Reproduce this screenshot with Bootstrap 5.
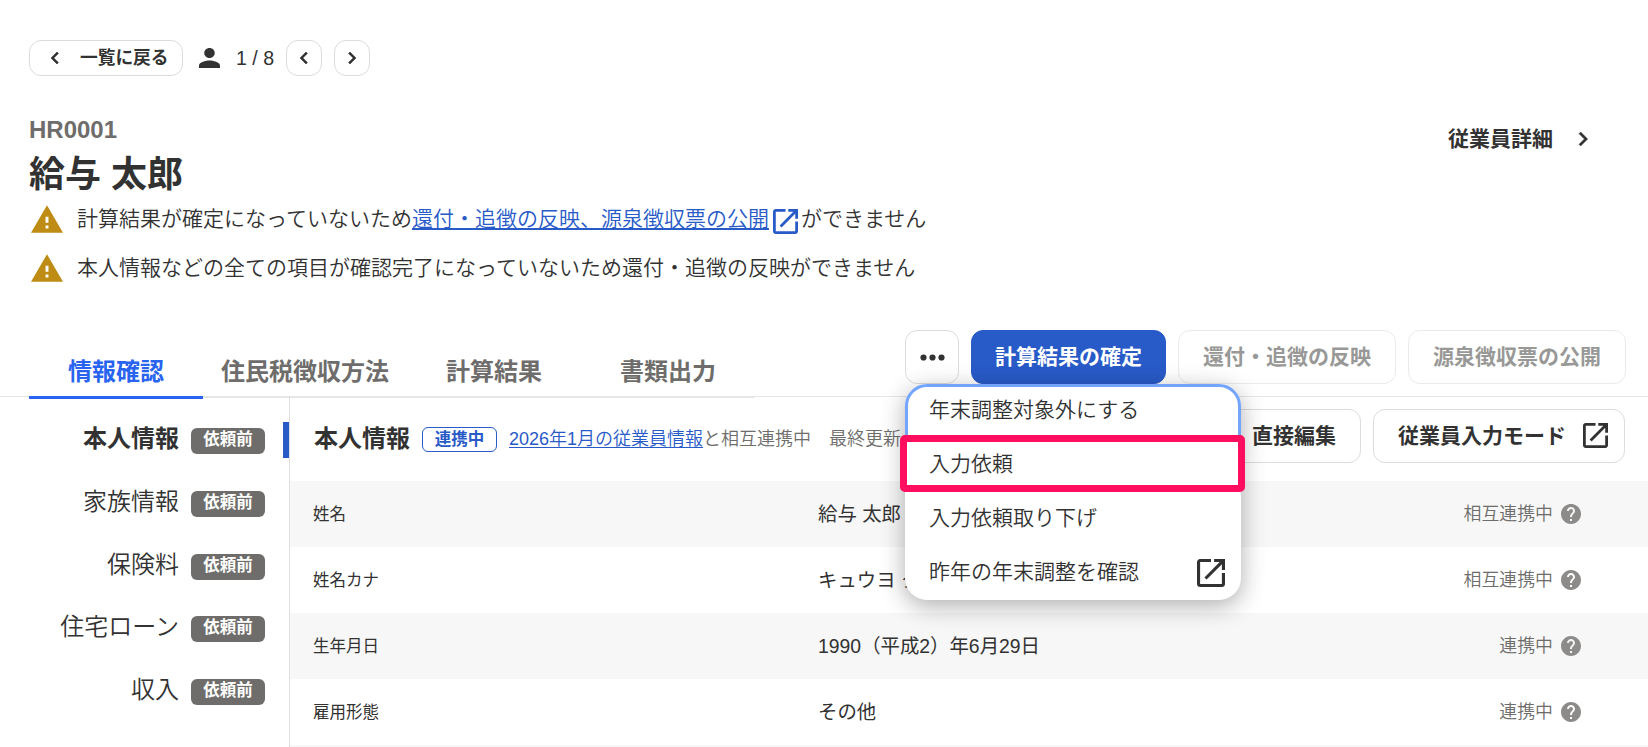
<!DOCTYPE html>
<html lang="ja">
<head>
<meta charset="utf-8">
<meta name="viewport" content="width=device-width, initial-scale=1">
<title>給与 太郎</title>
<link href="https://cdn.jsdelivr.net/npm/bootstrap@5.3.0/dist/css/bootstrap.min.css" rel="stylesheet">
<style>
body{font-family:"Liberation Sans","Noto Sans CJK JP",sans-serif;color:#323232;font-size:21px;line-height:30px;height:747px;overflow:hidden;background:#fff;white-space:nowrap}
svg{display:block;flex:none}
a{color:#285ac8}
.topbar{padding:40px 0 0 29px;height:76px}
.pill{--bs-btn-border-color:#dcdcdc;--bs-btn-color:#323232;--bs-btn-bg:#fff;--bs-btn-border-radius:12px;--bs-btn-padding-x:0;--bs-btn-padding-y:0;height:36px;display:flex;align-items:center;justify-content:center;line-height:1}
.pill svg{stroke:#323232;stroke-width:.6}
.pill.square{width:36px}
.pill.back{width:154px;font-size:17.7px;font-weight:700;justify-content:flex-start;padding-left:13px}
.back span{margin-left:13px;padding-top:1px}
.counter{height:36px;margin-left:16px;font-size:19.6px}
.head{height:254px;padding:37px 0 0 29px}
.code{font-size:24px;line-height:34px;font-weight:700;color:#6e6d6b}
.fullname{font-size:36px;line-height:48px;font-weight:700;margin-top:2px;position:relative;top:2px}
.detail{font-weight:700;margin:11px 51px 0 0;height:30px}
.alertline{height:49px;font-weight:350;padding-top:7px}
.alertline .tri{margin:1px 14px 0 2px}
.alertline a{text-decoration-thickness:2px;text-underline-offset:2px}
.tabbar{height:67px;border-bottom:1px solid #e6e6e4}
.tabs{margin-left:29px;width:726px;height:68px;border-bottom:2px solid #e6e6e4;padding-top:17px;margin-bottom:-1px;--bs-nav-link-color:#6e6d6b}
.tabs .nav-link{padding:8px 0 0;width:174px;text-align:center;font-size:24px;line-height:34px;font-weight:700;height:52px}
.tabs .nav-link.wide{width:204px}
.tabs .nav-link.active{color:#2864f0;border-bottom:3px solid #2864f0}
.act{height:54px;border-radius:12px;border:1px solid #dcdcdc;background:#fff;font-size:21px;font-weight:700;line-height:1;padding:0 24px 2px;color:#323232;display:flex;align-items:center}
.act.main{background:#285ac8;border-color:#285ac8;color:#fff;width:195px;padding:0 0 2px;justify-content:center}
.act.off{border-color:#ebebeb;color:#989897;opacity:1}
.act.dots{width:54px;padding:0;justify-content:center}
.actions{gap:12px;margin-right:22px}
.menu{position:absolute;top:54px;left:0;width:336px;height:216px;border-radius:22px;background:#fff;box-shadow:0 6px 24px rgba(0,0,0,.32);z-index:5}
.menu .entry{height:54px;padding:0 16px 2px 24px;display:flex;align-items:center;justify-content:space-between;position:relative;font-weight:350}
.menu .entry svg{position:relative;top:1px}
.menu .entry:first-child{border:3px solid #73a5ff;border-radius:22px 22px 0 0;padding-left:21px}
.marker::after{content:"";position:absolute;left:-5px;top:-3px;width:345px;height:57px;border:7px solid #ff0d5e;border-radius:5px}
.side{width:290px;border-right:1px solid #dfdfdf;padding-top:11px;font-size:24px;font-weight:350}
.side .entry{height:62.7px;padding-right:24px;gap:12px}
.side .entry.on{font-weight:700;position:relative}
.side .entry.on::after{content:"";position:absolute;right:0;top:14px;width:6px;height:36px;background:#285ac8}
.tag{background:#6e6d6b;color:#fff;font-size:16.5px;font-weight:700;line-height:23px;height:26px;width:74px;text-align:center;border-radius:6px;position:relative;top:2px}
.sync{border:1px solid #285ac8;color:#285ac8;font-size:16.5px;font-weight:700;height:25px;line-height:22px;width:75px;text-align:center;border-radius:6px}
.sect{height:84px;padding:12px 23px 0 24px}
.sect h2{font-size:24px;line-height:34px;font-weight:700;margin:0 12px 0 0}
.info{font-size:18px;line-height:24px;color:#6e6d6b;font-weight:350;margin-left:12px}
.info a{text-underline-offset:2px}
.rec{height:66px;padding:0 67px 0 23px;line-height:24px}
.rec:nth-child(even){background:#f7f7f7}
.rec .lbl{width:505px;font-size:16.5px}
.rec .val{font-size:19.4px}
.rec .st{font-size:17.9px;color:#6e6d6b;font-weight:350;gap:8px}
.rec:last-child{height:2px}
</style>
</head>
<body>
<svg width="0" height="0" class="position-absolute">
<symbol id="ext" viewBox="3 3 18 18"><path d="M19 19H5V5h7V3H5c-1.11 0-2 .9-2 2v14c0 1.1.89 2 2 2h14c1.1 0 2-.9 2-2v-7h-2v7zM14 3v2h3.59l-9.83 9.83 1.41 1.41L19 6.41V10h2V3h-7z"/></symbol>
<symbol id="lt" viewBox="0 0 24 24"><path d="M15.41 7.41L14 6l-6 6 6 6 1.41-1.41L10.83 12z"/></symbol>
<symbol id="gt" viewBox="0 0 24 24"><path d="M10 6L8.59 7.41 13.17 12l-4.58 4.59L10 18l6-6z"/></symbol>
<symbol id="warn" viewBox="1 2 22 19"><path d="M1 21h22L12 2 1 21zm12-3h-2v-2h2v2zm0-4h-2v-4h2v4z"/></symbol>
<symbol id="help" viewBox="2 2 20 20"><path d="M12 2C6.48 2 2 6.48 2 12s4.48 10 10 10 10-4.48 10-10S17.52 2 12 2zm1 17h-2v-2h2v2zm2.07-7.75l-.9.92C13.45 12.9 13 13.5 13 15h-2v-.5c0-1.1.45-2.1 1.17-2.83l1.24-1.26c.37-.36.59-.86.59-1.41 0-1.1-.9-2-2-2s-2 .9-2 2H8c0-2.21 1.79-4 4-4s4 1.79 4 4c0 .88-.36 1.68-.93 2.25z"/></symbol>
</svg>

<nav class="topbar d-flex align-items-start">
  <button class="btn pill back"><svg width="24" height="24" fill="#323232"><use href="#lt"/></svg><span>一覧に戻る</span></button>
  <div class="counter d-flex align-items-center">
    <svg width="21" height="20" viewBox="4 4 16 16" preserveAspectRatio="none" fill="#323232"><path d="M12 12c2.210 0 4-1.790 4-4s-1.790-4-4-4-4 1.790-4 4 1.790 4 4 4zm0 2c-2.670 0-8 1.340-8 4v2h16v-2c0-2.660-5.330-4-8-4z"/></svg>
    <span class="ms-3">1 / 8</span>
  </div>
  <button class="btn pill square" style="margin-left:12px"><svg width="24" height="24" fill="#323232"><use href="#lt"/></svg></button>
  <button class="btn pill square" style="margin-left:12px"><svg width="24" height="24" fill="#323232"><use href="#gt"/></svg></button>
</nav>

<header class="head">
  <div class="d-flex justify-content-between">
    <div><div class="code">HR0001</div><h1 class="fullname mb-0">給与 太郎</h1></div>
    <div class="detail d-flex align-items-center">従業員詳細<svg class="ms-3" width="28" height="28" fill="#323232" stroke="#323232" stroke-width=".4"><use href="#gt"/></svg></div>
  </div>
  <div class="alertline d-flex align-items-start">
    <svg class="tri" width="32" height="28" fill="#be8c14"><use href="#warn"/></svg>計算結果が確定になっていないため<a href="#">還付・追徴の反映、源泉徴収票の公開</a><svg style="margin:5px 3px 0 4px" width="25" height="25" fill="#285ac8"><use href="#ext"/></svg>ができません
  </div>
  <div class="alertline d-flex align-items-start">
    <svg class="tri" width="32" height="28" fill="#be8c14"><use href="#warn"/></svg>本人情報などの全ての項目が確認完了になっていないため還付・追徴の反映ができません
  </div>
</header>

<div class="tabbar d-flex justify-content-between">
  <nav class="nav tabs flex-nowrap">
    <a class="nav-link active" href="#">情報確認</a><a class="nav-link wide" href="#">住民税徴収方法</a><a class="nav-link" href="#">計算結果</a><a class="nav-link" href="#">書類出力</a>
  </nav>
  <div class="actions d-flex align-items-start">
    <div class="position-relative">
      <button class="act dots"><svg width="25" height="7" fill="#323232"><circle cx="3.500" cy="3.500" r="3.100"/><circle cx="12.500" cy="3.500" r="3.100"/><circle cx="21.500" cy="3.500" r="3.100"/></svg></button>
      <div class="menu">
        <div class="entry">年末調整対象外にする</div>
        <div class="entry marker">入力依頼</div>
        <div class="entry">入力依頼取り下げ</div>
        <div class="entry">昨年の年末調整を確認<svg width="28" height="28" fill="#323232"><use href="#ext"/></svg></div>
      </div>
    </div>
    <button class="act main">計算結果の確定</button>
    <button class="act off" disabled>還付・追徴の反映</button>
    <button class="act off" disabled>源泉徴収票の公開</button>
  </div>
</div>

<main class="d-flex" style="height:350px">
  <aside class="side flex-shrink-0">
    <div class="entry on d-flex align-items-center justify-content-end">本人情報<span class="tag">依頼前</span></div>
    <div class="entry d-flex align-items-center justify-content-end">家族情報<span class="tag">依頼前</span></div>
    <div class="entry d-flex align-items-center justify-content-end">保険料<span class="tag">依頼前</span></div>
    <div class="entry d-flex align-items-center justify-content-end">住宅ローン<span class="tag">依頼前</span></div>
    <div class="entry d-flex align-items-center justify-content-end">収入<span class="tag">依頼前</span></div>
  </aside>
  <section class="flex-grow-1">
    <div class="sect d-flex align-items-start justify-content-between">
      <div class="d-flex align-items-center" style="height:60px"><h2>本人情報</h2><span class="sync">連携中</span>
        <span class="info"><a href="#">2026年1月の従業員情報</a>と相互連携中<span style="margin-left:18px">最終更新</span></span></div>
      <div class="d-flex" style="gap:12px"><button class="act">直接編集</button><button class="act" style="padding-right:16px">従業員入力モード<svg style="margin-left:17px" width="25" height="25" fill="#323232"><use href="#ext"/></svg></button></div>
    </div>
    <div class="rec d-flex align-items-center"><span class="lbl">姓名</span><span class="val">給与 太郎</span><span class="st d-flex align-items-center ms-auto">相互連携中<svg width="20" height="20" fill="#8c8b89"><use href="#help"/></svg></span></div>
    <div class="rec d-flex align-items-center"><span class="lbl">姓名カナ</span><span class="val">キュウヨ タロウ</span><span class="st d-flex align-items-center ms-auto">相互連携中<svg width="20" height="20" fill="#8c8b89"><use href="#help"/></svg></span></div>
    <div class="rec d-flex align-items-center"><span class="lbl">生年月日</span><span class="val">1990（平成2）年6月29日</span><span class="st d-flex align-items-center ms-auto">連携中<svg width="20" height="20" fill="#8c8b89"><use href="#help"/></svg></span></div>
    <div class="rec d-flex align-items-center"><span class="lbl">雇用形態</span><span class="val">その他</span><span class="st d-flex align-items-center ms-auto">連携中<svg width="20" height="20" fill="#8c8b89"><use href="#help"/></svg></span></div>
    <div class="rec"></div>
  </section>
</main>
<script src="https://cdn.jsdelivr.net/npm/bootstrap@5.3.0/dist/js/bootstrap.bundle.min.js"></script>
</body>
</html>
